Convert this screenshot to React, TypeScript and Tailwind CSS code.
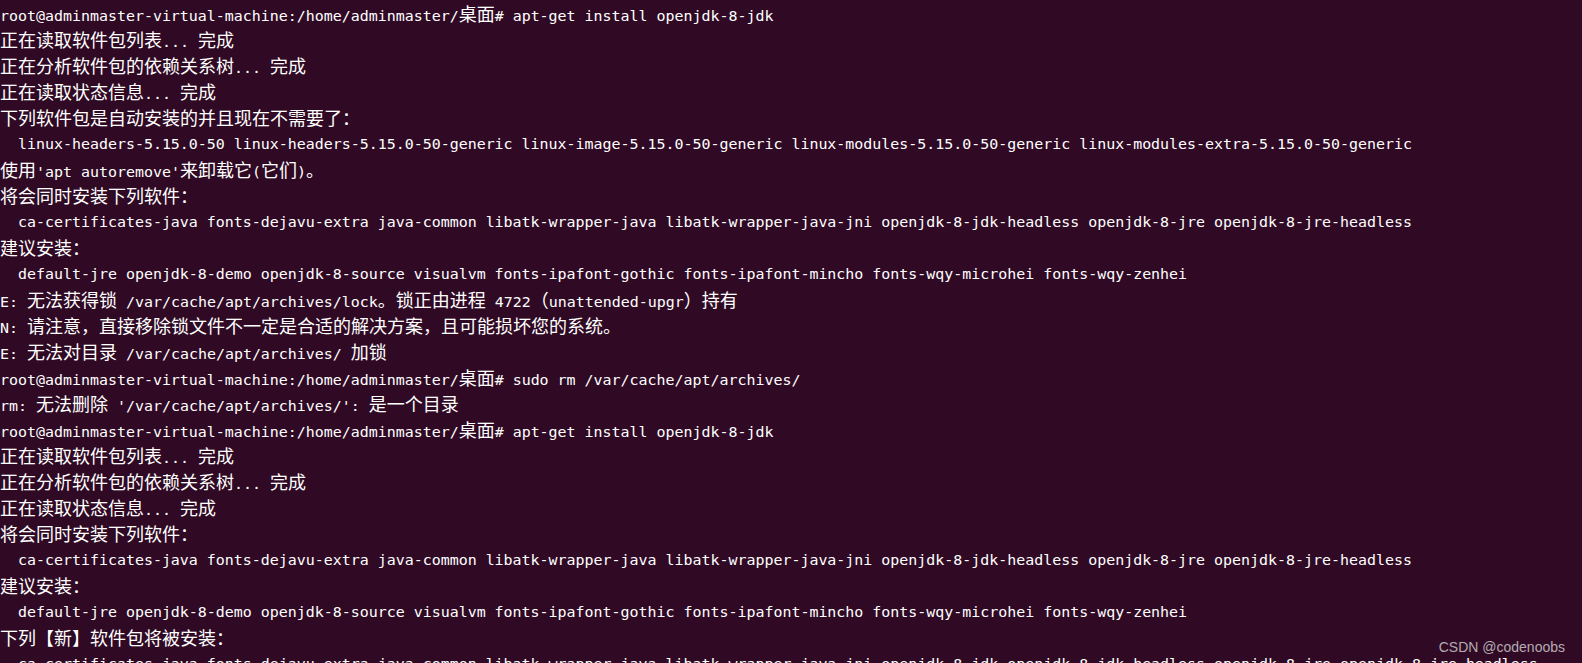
const LINES: string[] = [
  "root@adminmaster-virtual-machine:/home/adminmaster/桌面# apt-get install openjdk-8-jdk",
  "正在读取软件包列表... 完成",
  "正在分析软件包的依赖关系树... 完成",
  "正在读取状态信息... 完成",
  "下列软件包是自动安装的并且现在不需要了：",
  "  linux-headers-5.15.0-50 linux-headers-5.15.0-50-generic linux-image-5.15.0-50-generic linux-modules-5.15.0-50-generic linux-modules-extra-5.15.0-50-generic",
  "使用'apt autoremove'来卸载它(它们)。",
  "将会同时安装下列软件：",
  "  ca-certificates-java fonts-dejavu-extra java-common libatk-wrapper-java libatk-wrapper-java-jni openjdk-8-jdk-headless openjdk-8-jre openjdk-8-jre-headless",
  "建议安装：",
  "  default-jre openjdk-8-demo openjdk-8-source visualvm fonts-ipafont-gothic fonts-ipafont-mincho fonts-wqy-microhei fonts-wqy-zenhei",
  "E: 无法获得锁 /var/cache/apt/archives/lock。锁正由进程 4722（unattended-upgr）持有",
  "N: 请注意，直接移除锁文件不一定是合适的解决方案，且可能损坏您的系统。",
  "E: 无法对目录 /var/cache/apt/archives/ 加锁",
  "root@adminmaster-virtual-machine:/home/adminmaster/桌面# sudo rm /var/cache/apt/archives/",
  "rm: 无法删除 '/var/cache/apt/archives/': 是一个目录",
  "root@adminmaster-virtual-machine:/home/adminmaster/桌面# apt-get install openjdk-8-jdk",
  "正在读取软件包列表... 完成",
  "正在分析软件包的依赖关系树... 完成",
  "正在读取状态信息... 完成",
  "将会同时安装下列软件：",
  "  ca-certificates-java fonts-dejavu-extra java-common libatk-wrapper-java libatk-wrapper-java-jni openjdk-8-jdk-headless openjdk-8-jre openjdk-8-jre-headless",
  "建议安装：",
  "  default-jre openjdk-8-demo openjdk-8-source visualvm fonts-ipafont-gothic fonts-ipafont-mincho fonts-wqy-microhei fonts-wqy-zenhei",
  "下列【新】软件包将被安装：",
  "  ca-certificates-java fonts-dejavu-extra java-common libatk-wrapper-java libatk-wrapper-java-jni openjdk-8-jdk openjdk-8-jdk-headless openjdk-8-jre openjdk-8-jre-headless",
];

const WIDE = /[\u3000-\u303f\u4e00-\u9fff\uff00-\uffef]/;

// split a line into runs of narrow (ascii) and wide (cjk) characters
function splitRuns(line: string) {
  const runs: { wide: boolean; text: string }[] = [];
  for (const ch of line) {
    const wide = WIDE.test(ch);
    const last = runs[runs.length - 1];
    if (last && last.wide === wide) last.text += ch;
    else runs.push({ wide, text: ch });
  }
  return runs;
}

function TermLine({ text }: { text: string }) {
  return (
    <div className="h-[26px] leading-[26px] whitespace-pre">
      {splitRuns(text).map((r, i) =>
        r.wide ? (
          <span
            key={i}
            className="text-[18px] font-['Noto_Sans_CJK_SC',sans-serif]"
          >
            {r.text}
          </span>
        ) : (
          <span
            key={i}
            className="text-[14.95px] font-['DejaVu_Sans_Mono','Noto_Sans_CJK_SC',monospace]"
          >
            {r.text}
          </span>
        )
      )}
    </div>
  );
}

export default function App() {
  return (
    <div className="relative w-[1582px] h-[663px] overflow-hidden bg-[#300a24] text-white">
      <div className="flex flex-col">
        {LINES.map((l, i) => (
          <TermLine key={i} text={l} />
        ))}
      </div>

      {/* Watermark */}
      <div className="absolute right-[17px] bottom-[7px] text-[14px] leading-[18px] text-[#b4acb2] font-['Liberation_Sans',Arial,sans-serif]">
        CSDN @codenoobs
      </div>
    </div>
  );
}
